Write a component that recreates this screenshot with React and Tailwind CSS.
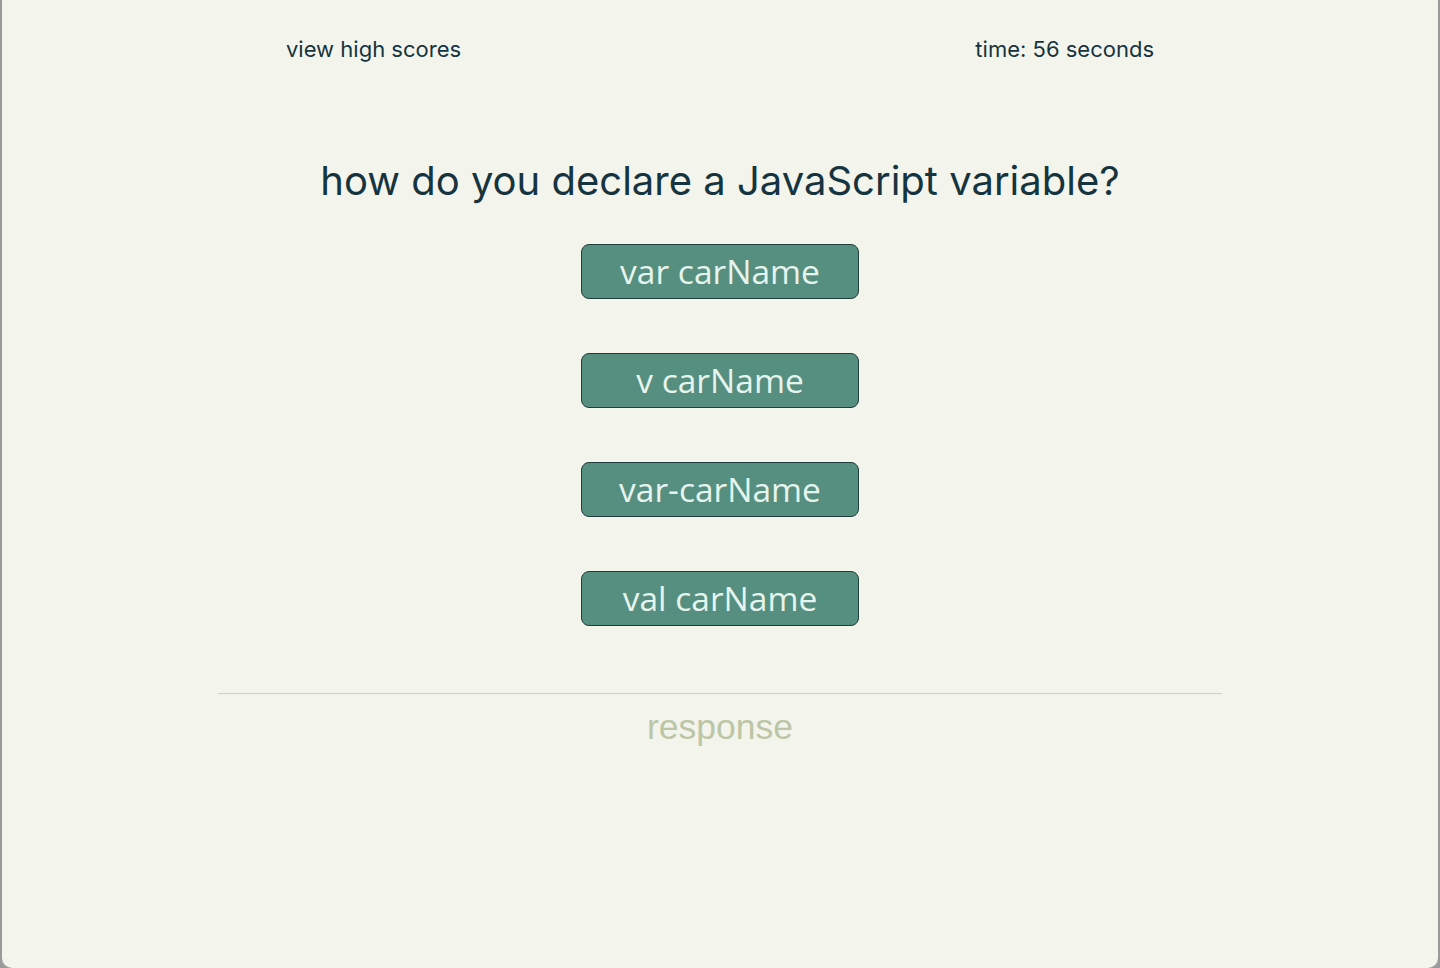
import React from "react";

const answers = ["var carName", "v carName", "var-carName", "val carName"];

const App = () => {
  return (
    <div className="h-[968px] w-[1440px] bg-[#9a9a9a] overflow-hidden">
      <div className="h-[968px] mx-[2px] rounded-b-[10px] bg-[#f3f4ec] flex flex-col items-center">
        <header
          className="w-[1004px] px-[68px] flex justify-between items-center h-[98px] text-[22px] text-[#16343f]"
          style={{ fontFamily: "Inter, sans-serif" }}
        >
          <a href="#">view high scores</a>
          <span>time: 56 seconds</span>
        </header>

        <h1
          className="mt-[63px] text-[40px] leading-[40px] text-[#16343f]"
          style={{ fontFamily: "Inter, sans-serif" }}
        >
          how do you declare a JavaScript variable?
        </h1>

        <div className="mt-[43px] flex flex-col gap-[54px]">
          {answers.map((answer, index) => (
            <button
              key={index}
              className="w-[278px] h-[55px] rounded-[8px] border border-[#1f3d3a] bg-[#568f7f] text-[#e6f4ee] text-[33.5px] leading-none"
              style={{ fontFamily: "'Open Sans', sans-serif" }}
            >
              {answer}
            </button>
          ))}
        </div>

        <div className="mt-[67px] w-[1004px] border-t border-[#cfd3bb]"></div>
        <p
          className="mt-[7px] text-[35.5px] text-[#bcc6a7]"
          style={{ fontFamily: "'Liberation Sans', Arial, sans-serif" }}
        >
          response
        </p>
      </div>
    </div>
  );
};

export default App;
